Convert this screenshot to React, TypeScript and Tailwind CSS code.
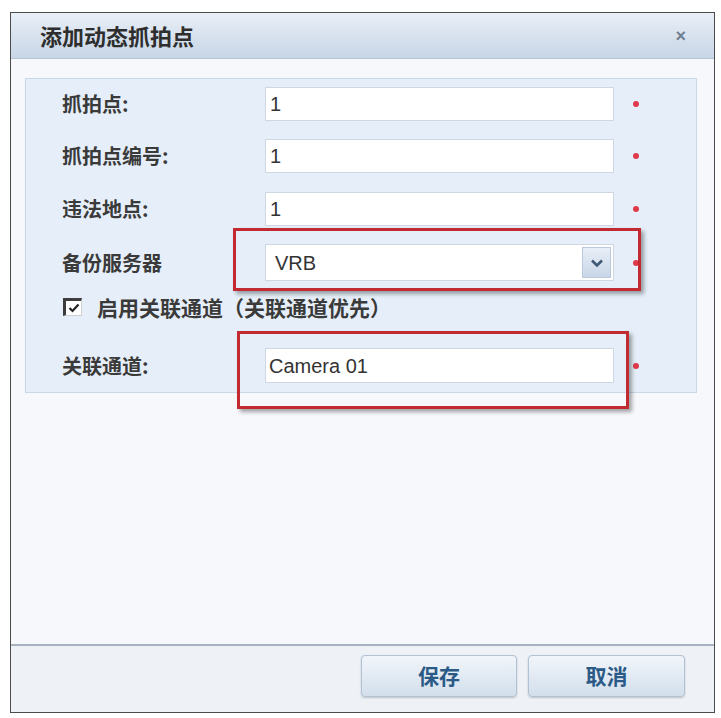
import React from 'react'

const cjk = "font-['Noto_Sans_CJK_SC','Noto_Sans',sans-serif]"
const latin = "font-['Liberation_Sans','Noto_Sans_CJK_SC',sans-serif]"

function Field({ label, value, mt }: { label: string; value: string; mt: string }) {
    return (
        <div className={`flex items-center h-[34px] ${mt}`}>
            <div className={`w-[239px] pl-[36px] text-[20px] font-bold text-[#3a3a3a] leading-none ${cjk}`}>{label}</div>
            <div className={`w-[349px] h-full bg-white border border-[#cfd8e2] flex items-center pl-[4px] text-[20px] text-[#333] ${latin}`}>
                {value}
            </div>
            <span className="ml-[19px] w-[6px] h-[6px] rounded-full bg-[#e03a4a]" />
        </div>
    )
}

export default function App() {
    return (
        <div className="w-[721px] h-[718px] bg-white pt-[12px] pl-[10px]">
            <div className="w-[705px] h-[701px] border border-[#4b4b4b] flex flex-col bg-[#f6f8fc]">
                {/* title bar */}
                <div className="h-[46px] shrink-0 flex items-center justify-between pl-[29px] pr-[28px] bg-gradient-to-b from-[#e9eff6] to-[#c8d6e7] border-b border-[#b5c4d6]">
                    <span className={`text-[22px] font-bold text-[#2e2e2e] ${cjk}`}>添加动态抓拍点</span>
                    <span className={`text-[18px] font-bold text-[#6f8092] leading-none ${latin}`}>×</span>
                </div>

                {/* form body */}
                <div className="flex-1 pt-[19px]">
                    <div className="relative ml-[14px] w-[672px] h-[315px] bg-[#e6eff9] border border-[#c9d8e9] pt-[8px]">
                        <Field label="抓拍点:" value="1" mt="mt-0" />
                        <Field label="抓拍点编号:" value="1" mt="mt-[18px]" />
                        <Field label="违法地点:" value="1" mt="mt-[19px]" />

                        <div className="flex items-center h-[37px] mt-[18px]">
                            <div className={`w-[239px] pl-[36px] text-[20px] font-bold text-[#3a3a3a] leading-none ${cjk}`}>备份服务器</div>
                            <div className={`w-[349px] h-full bg-white border border-[#cfd8e2] flex items-center justify-between pl-[9px] pr-[2px] text-[20px] text-[#333] ${latin}`}>
                                VRB
                                <span className="w-[29px] h-[31px] flex items-center justify-center bg-gradient-to-b from-[#e8eef7] to-[#c9d6e8] border border-[#b9c8da]">
                                    <svg width="14" height="10" viewBox="0 0 14 10">
                                        <path d="M2 2.5 L7 7.5 L12 2.5" fill="none" stroke="#3f5875" strokeWidth="2.6" />
                                    </svg>
                                </span>
                            </div>
                            <span className="ml-[19px] w-[6px] h-[6px] rounded-full bg-[#e03a4a]" />
                        </div>

                        <div className="flex items-center h-[18px] mt-[17px] pl-[37px]">
                            <span className="w-[19px] h-[18px] bg-white border-t-[3px] border-l-[3px] border-b border-r border-t-[#3d3d3d] border-l-[#3d3d3d] border-b-[#d0d0d0] border-r-[#d0d0d0] flex items-center justify-center">
                                <svg width="12" height="10" viewBox="0 0 12 10">
                                    <path d="M1.5 5 L4.5 8 L10.5 1.5" fill="none" stroke="#222" strokeWidth="2.2" />
                                </svg>
                            </span>
                            <span className={`ml-[15px] text-[21px] font-bold text-[#3a3a3a] leading-none ${cjk}`}>启用关联通道（关联通道优先）</span>
                        </div>

                        <div className="flex items-center h-[35px] mt-[32px]">
                            <div className={`w-[239px] pl-[36px] text-[20px] font-bold text-[#3a3a3a] leading-none ${cjk}`}>关联通道:</div>
                            <div className={`w-[349px] h-full bg-white border border-[#cfd8e2] flex items-center pl-[3px] text-[20px] text-[#333] ${latin}`}>
                                Camera 01
                            </div>
                            <span className="ml-[19px] w-[6px] h-[6px] rounded-full bg-[#e03a4a]" />
                        </div>

                        {/* highlight frames */}
                        <div className="absolute left-[207px] top-[149px] w-[408px] h-[63px] border-[3px] border-[#c12a30] shadow-[3px_3px_4px_rgba(0,0,0,0.35)]" />
                        <div className="absolute left-[211px] top-[252px] w-[392px] h-[78px] border-[3px] border-[#c12a30] shadow-[3px_3px_4px_rgba(0,0,0,0.35)]" />
                    </div>
                </div>

                {/* footer */}
                <div className="h-[68px] shrink-0 border-t-2 border-[#a7b2be] bg-[#eef1f5] flex items-start justify-end pt-[9px] pr-[29px] gap-[11px]">
                    <button className={`w-[156px] h-[42px] rounded-[4px] border border-[#b0c2d4] bg-gradient-to-b from-[#f1f5fa] to-[#d3dfec] shadow-[0_1px_2px_rgba(0,0,0,0.2)] text-[21px] font-bold text-[#2b5a86] ${cjk}`}>保存</button>
                    <button className={`w-[157px] h-[42px] rounded-[4px] border border-[#b0c2d4] bg-gradient-to-b from-[#f1f5fa] to-[#d3dfec] shadow-[0_1px_2px_rgba(0,0,0,0.2)] text-[21px] font-bold text-[#2b5a86] ${cjk}`}>取消</button>
                </div>
            </div>
        </div>
    )
}
